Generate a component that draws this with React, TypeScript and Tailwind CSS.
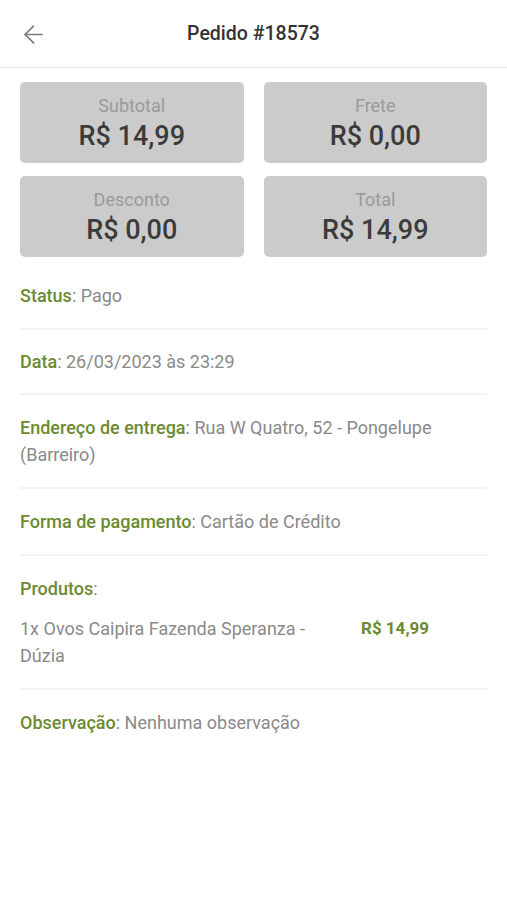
import { ArrowLeft } from "lucide-react";

const summary = [
  { label: "Subtotal", value: "R$ 14,99" },
  { label: "Frete", value: "R$ 0,00" },
  { label: "Desconto", value: "R$ 0,00" },
  { label: "Total", value: "R$ 14,99" },
];

function Field({ label, value }: { label: string; value: string }) {
  return (
    <p className="text-[18px] leading-[27px] text-[#8a8a8a]">
      <span className="font-medium text-[#6c8a32]">{label}</span>: {value}
    </p>
  );
}

export default function App() {
  return (
    <div className="min-h-[900px] bg-white font-['Roboto',sans-serif]">
      {/* Header */}
      <header className="relative flex h-[68px] items-center justify-center border-b border-[#ececec]">
        <button className="absolute left-[19px] top-[20px] text-[#7a7a7a]">
          <ArrowLeft size={29} strokeWidth={1.4} />
        </button>
        <h1 className="text-[19.5px] font-medium text-[#333]">Pedido #18573</h1>
      </header>

      <div className="px-[20px]">
        {/* Resumo */}
        <div className="mt-[14px] grid grid-cols-2 gap-x-[20px] gap-y-[13px]">
          {summary.map((item) => (
            <div
              key={item.label}
              className="flex h-[81px] flex-col items-center justify-center rounded-[5px] bg-[#cbcbcb] pt-[2px]"
            >
              <span className="text-[18px] leading-[22px] text-[#9a9a9a]">{item.label}</span>
              <span className="mt-[3px] text-[27px] font-medium leading-[33px] text-[#3b3b3b]">{item.value}</span>
            </div>
          ))}
        </div>

        {/* Detalhes */}
        <div className="mt-[6px] flex flex-col">
          <div className="border-b-2 border-[#f3f3f3] py-[19px]">
            <Field label="Status" value="Pago" />
          </div>
          <div className="border-b-2 border-[#f3f3f3] py-[18px]">
            <Field label="Data" value="26/03/2023 às 23:29" />
          </div>
          <div className="border-b-2 border-[#f3f3f3] py-[19px]">
            <Field label="Endereço de entrega" value="Rua W Quatro, 52 - Pongelupe (Barreiro)" />
          </div>
          <div className="border-b-2 border-[#f3f3f3] py-[19px]">
            <Field label="Forma de pagamento" value="Cartão de Crédito" />
          </div>
          <div className="border-b-2 border-[#f3f3f3] py-[19px]">
            <p className="text-[18px] leading-[27px] text-[#8a8a8a]">
              <span className="font-medium text-[#6c8a32]">Produtos</span>:
            </p>
            <div className="mt-[13px] flex items-start">
              <span className="w-[310px] shrink-0 text-[18px] leading-[27px] text-[#8a8a8a]">
                1x Ovos Caipira Fazenda Speranza - Dúzia
              </span>
              <span className="ml-[31px] text-[17px] font-bold leading-[27px] text-[#6c8a32]">R$ 14,99</span>
            </div>
          </div>
          <div className="py-[19px]">
            <Field label="Observação" value="Nenhuma observação" />
          </div>
        </div>
      </div>
    </div>
  );
}
